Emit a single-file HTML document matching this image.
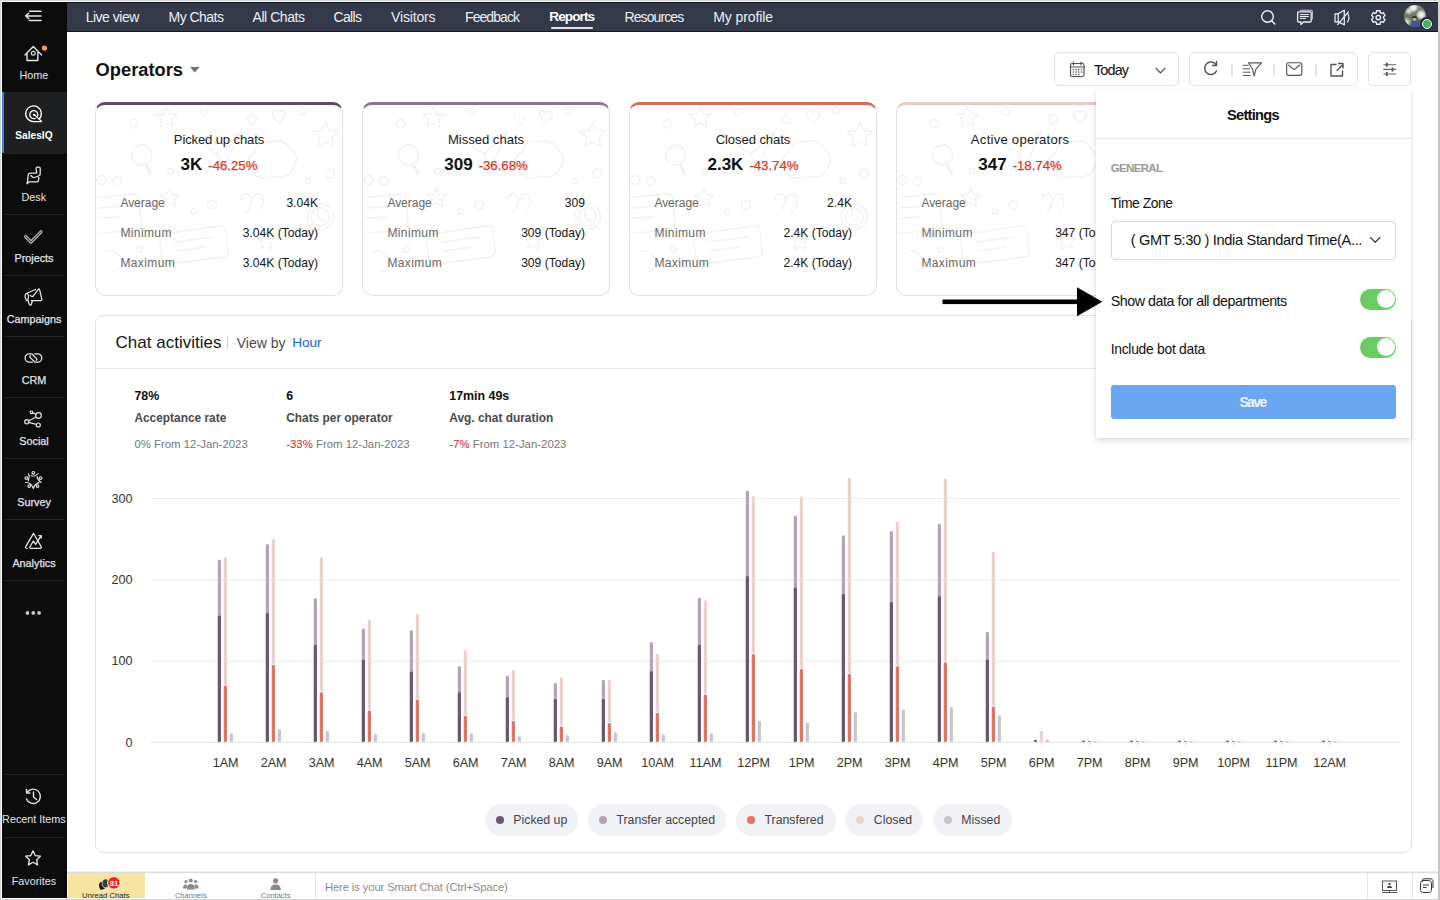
<!DOCTYPE html><html><head><meta charset="utf-8"><style>
*{box-sizing:border-box;margin:0;padding:0}
html,body{width:1440px;height:900px;overflow:hidden;background:#d4d4d4;font-family:"Liberation Sans",sans-serif;}
.abs{position:absolute}
.t{position:absolute;white-space:nowrap;line-height:1}
svg{position:absolute;left:0;top:0;overflow:visible}
</style></head><body>
<div class="abs" style="left:1px;top:1px;width:1437px;height:898px;background:#fff"></div>
<div class="abs" style="left:1438px;top:32px;width:2px;height:868px;background:#c6c6c6"></div>
<div class="abs" style="left:2px;top:2px;width:65px;height:896px;background:#0c0c0c"></div>
<div class="abs" style="left:2px;top:92px;width:65px;height:61px;background:#1e1f20"></div>
<div class="abs" style="left:2px;top:92px;width:2px;height:61px;background:#3d86e0"></div>
<div class="abs" style="left:4px;top:153px;width:60px;height:1px;background:#232324"></div>
<div class="abs" style="left:4px;top:214px;width:60px;height:1px;background:#232324"></div>
<div class="abs" style="left:4px;top:275px;width:60px;height:1px;background:#232324"></div>
<div class="abs" style="left:4px;top:336px;width:60px;height:1px;background:#232324"></div>
<div class="abs" style="left:4px;top:397px;width:60px;height:1px;background:#232324"></div>
<div class="abs" style="left:4px;top:458px;width:60px;height:1px;background:#232324"></div>
<div class="abs" style="left:4px;top:519px;width:60px;height:1px;background:#232324"></div>
<div class="abs" style="left:4px;top:580px;width:60px;height:1px;background:#232324"></div>
<div class="abs" style="left:4px;top:774px;width:60px;height:1px;background:#232324"></div>
<div class="abs" style="left:4px;top:837px;width:60px;height:1px;background:#232324"></div>
<div class="t" style="left:-366.23px;width:800px;text-align:center;top:69.86px;font-size:10.8px;font-weight:normal;color:#e2e2e8;-webkit-text-stroke:0.25px #e2e2e8letter-spacing:-0.469px;">Home</div>
<div class="t" style="left:-366.14px;width:800px;text-align:center;top:131.37px;font-size:10.2px;font-weight:bold;color:#ffffff;-webkit-text-stroke:0.25px #ffffffletter-spacing:-0.270px;">SalesIQ</div>
<div class="t" style="left:-366.22px;width:800px;text-align:center;top:191.86px;font-size:10.8px;font-weight:normal;color:#e2e2e8;-webkit-text-stroke:0.25px #e2e2e8letter-spacing:-0.435px;">Desk</div>
<div class="t" style="left:-366.00px;width:800px;text-align:center;top:252.86px;font-size:10.8px;font-weight:normal;color:#e2e2e8;-webkit-text-stroke:0.25px #e2e2e8">Projects</div>
<div class="t" style="left:-366.00px;width:800px;text-align:center;top:313.86px;font-size:10.8px;font-weight:normal;color:#e2e2e8;-webkit-text-stroke:0.25px #e2e2e8">Campaigns</div>
<div class="t" style="left:-366.00px;width:800px;text-align:center;top:374.86px;font-size:10.8px;font-weight:normal;color:#e2e2e8;-webkit-text-stroke:0.25px #e2e2e8">CRM</div>
<div class="t" style="left:-366.00px;width:800px;text-align:center;top:435.86px;font-size:10.8px;font-weight:normal;color:#e2e2e8;-webkit-text-stroke:0.25px #e2e2e8">Social</div>
<div class="t" style="left:-366.00px;width:800px;text-align:center;top:496.86px;font-size:10.8px;font-weight:normal;color:#e2e2e8;-webkit-text-stroke:0.25px #e2e2e8">Survey</div>
<div class="t" style="left:-366.00px;width:800px;text-align:center;top:557.86px;font-size:10.8px;font-weight:normal;color:#e2e2e8;-webkit-text-stroke:0.25px #e2e2e8">Analytics</div>
<div class="t" style="left:-366.12px;width:800px;text-align:center;top:813.86px;font-size:10.8px;font-weight:normal;color:#e2e2e8;-webkit-text-stroke:0.25px #e2e2e8letter-spacing:-0.238px;">Recent Items</div>
<div class="t" style="left:-366.06px;width:800px;text-align:center;top:875.86px;font-size:10.8px;font-weight:normal;color:#e2e2e8;-webkit-text-stroke:0.25px #e2e2e8letter-spacing:-0.114px;">Favorites</div>
<svg width="1440" height="900" fill="none" stroke="#e4e4ea" stroke-width="1.4" stroke-linecap="round" stroke-linejoin="round">
  <path d="M29.5 11.2H41M29.5 20.6H41M26.5 15.9H41" stroke-width="1.5"/>
  <path d="M28.7 13.2L25.8 15.9L28.7 18.6" stroke-width="1.5"/>
  <path d="M25 55L33.3 46.5L41.6 55M27 53V60.5H37.8V53"/>
  <circle cx="33.3" cy="53.2" r="1.9" stroke-width="1.2"/>
  <circle cx="44.5" cy="48.1" r="2.6" fill="#f2a23a" stroke="none"/>
  <g stroke="#fff" stroke-width="1.3"><path d="M39.0 119.3A7.8 7.8 0 1 0 33.4 121.55H41.6L34.6 114.9"/><path d="M35.17 118.36A4 4 0 1 1 37.56 115.97"/></g><circle cx="34.1" cy="114.9" r="1.1" fill="#fff" stroke="none"/>
  <path d="M27.2 183.6L28.3 174.8Q28.6 173.2 30.2 173.2H35.6Q37 173.2 36.6 171.6L36.1 169.3Q35.8 167.1 37.6 167.1H39Q40.2 167.1 40.2 168.6V173.5Q40.2 175.3 38.4 176L34.3 177.5Q33.5 177.8 32.8 177.3L30.9 175.6" stroke-width="1.3"/><path d="M27.2 183.6L29.2 181.8H37Q38.3 181.8 38.5 180.3L38.9 177.3" stroke-width="1.3"/>
  <path d="M25.5 236.5L31 242L41 231.8" stroke="#a8a8b0" stroke-width="3.3" stroke-linecap="round"/><path d="M25.5 236.5L31 242L41 231.8" stroke="#0c0c0c" stroke-width="0.9" stroke-dasharray="0.9 0.9"/>
  <path d="M25.8 293.8L35.5 289.5M30.2 295.3Q31.5 296.8 33 296.3L38.4 289.2Q39 288.5 39.5 289.3L41.8 299Q42 300.5 40.5 300.5H31.3M25.8 293.8Q24.8 295 25.2 297.5L26.3 300Q27.3 301.3 28 300.2L28.5 296Q28.2 294 27.2 293.6M28 300.5L29.5 304.8Q30.5 305.5 31.3 304.5L32.3 300.8" stroke-width="1.25"/>
  <path d="M32.3 362.2H29.3A4.2 4.2 0 0 1 29.3 353.8H31.8L36.6 358.6Q37.3 359.6 36.2 360.2M34.8 353.8H37.6A4.2 4.2 0 0 1 37.6 362.2H34.9L30.1 357.4Q29.4 356.4 30.5 355.8" stroke-width="1.3"/>
  <g stroke-width="1.2"><circle cx="31.5" cy="412.3" r="1.3"/><circle cx="38.5" cy="415.5" r="2.8"/><circle cx="26.8" cy="421.7" r="2.1"/><circle cx="38.3" cy="425" r="2"/><path d="M32.8 412.9L35.7 414.2M36 417.3L28.7 420.7M28.8 422.4L36.3 424.4"/></g>
  <g stroke-width="1.15"><circle cx="33.3" cy="472.8" r="1.3"/><circle cx="26.3" cy="478" r="1.3"/><circle cx="40.5" cy="478" r="1.3"/><circle cx="29.2" cy="486" r="1.3"/><circle cx="37.5" cy="486" r="1.3"/><path d="M28.6 473.8Q30 477 28.2 480.7M31 475.6Q33.3 477.6 38.2 473.6M37.3 476.5Q36.8 479 41 482.5M25.5 482.5Q31 482 33.3 488.5Q35 483.5 39 482.6"/></g>
  <path d="M27 548.3Q25 548.3 25.6 546.8L33.5 533.3L41.2 546.8Q41.6 548.3 40 548.3H30.3" stroke-width="1.3"/><path d="M29.6 547.5L33.3 541L35.6 544.3L41 535.8M38.8 535.6H41.2V538" stroke-width="1.3"/>
  <circle cx="27.45" cy="612.9" r="1.85" fill="#c6c6d2" stroke="none"/><circle cx="33.3" cy="612.9" r="1.85" fill="#c6c6d2" stroke="none"/><circle cx="39.1" cy="612.9" r="1.85" fill="#c6c6d2" stroke="none"/>
  <path d="M26.5 799A7.2 7.2 0 1 0 27.6 791.8"/>
  <path d="M26.5 789.5V793H30"/>
  <path d="M33.5 792V797L36.5 799.5"/>
  <path d="M33 850.8L35.2 855.6L40.4 856.2L36.6 859.7L37.6 864.9L33 862.3L28.4 864.9L29.4 859.7L25.6 856.2L30.8 855.6Z" stroke-width="1.3"/>
</svg>

<div class="abs" style="left:67px;top:2px;width:1371px;height:30px;background:#353a4b;border-top:1px solid #0d1120;border-bottom:1px solid #12172a"></div>
<div class="t" style="left:85.70px;top:9.75px;font-size:14px;font-weight:normal;color:#eceef3;letter-spacing:-0.497px;">Live view</div>
<div class="t" style="left:168.50px;top:9.75px;font-size:14px;font-weight:normal;color:#eceef3;letter-spacing:-0.532px;">My Chats</div>
<div class="t" style="left:252.50px;top:9.75px;font-size:14px;font-weight:normal;color:#eceef3;letter-spacing:-0.440px;">All Chats</div>
<div class="t" style="left:333.60px;top:9.75px;font-size:14px;font-weight:normal;color:#eceef3;letter-spacing:-0.704px;">Calls</div>
<div class="t" style="left:391.00px;top:9.75px;font-size:14px;font-weight:normal;color:#eceef3;letter-spacing:-0.149px;">Visitors</div>
<div class="t" style="left:465.00px;top:9.75px;font-size:14px;font-weight:normal;color:#eceef3;letter-spacing:-0.925px;">Feedback</div>
<div class="t" style="left:624.50px;top:9.75px;font-size:14px;font-weight:normal;color:#eceef3;letter-spacing:-0.895px;">Resources</div>
<div class="t" style="left:713.30px;top:9.75px;font-size:14px;font-weight:normal;color:#eceef3;letter-spacing:-0.103px;">My profile</div>
<div class="t" style="left:549.30px;top:10.09px;font-size:13.6px;font-weight:bold;color:#ffffff;letter-spacing:-0.939px;">Reports</div>
<div class="abs" style="left:551px;top:26.5px;width:42px;height:2px;background:#e6e6ea;border-radius:1px"></div>
<svg width="1440" height="900" fill="none" stroke="#f0f0f4" stroke-width="1.4" stroke-linecap="round" stroke-linejoin="round">
  <circle cx="1267.5" cy="16.5" r="5.8"/><path d="M1271.7 20.7L1274.8 24"/>
  <path d="M1298.8 11.8H1310Q1311.2 11.8 1311.2 13V20.8Q1311.2 22 1310 22H1303.5L1301 24.6V22H1298.8Q1297.6 22 1297.6 20.8V13Q1297.6 11.8 1298.8 11.8Z" stroke-width="1.3"/>
  <path d="M1300.5 10.3H1311Q1312.3 10.3 1312.3 11.6V19" stroke-width="1.1" stroke="#c9cad2"/>
  <path d="M1300.2 14.6H1308.4M1300.2 16.5H1308.4M1300.2 18.4H1305.6" stroke-width="1"/>
  <path d="M1335 13.8H1338.2V21.9H1335Z" stroke-width="1.25"/>
  <path d="M1338.2 13.8L1344.3 10.2V24.8L1338.2 21.9" stroke-width="1.25"/>
  <path d="M1347.6 13.2Q1350.2 17.5 1347.6 22" stroke-width="1.2"/>
  <path d="M1337.6 24.6L1348.4 11.8" stroke-width="1.2"/>
  <path d="M1376.61 10.71 L1379.99 10.71 L1380.29 12.59 L1381.56 13.32 L1383.34 12.64 L1385.03 15.57 L1383.55 16.76 L1383.55 18.24 L1385.03 19.43 L1383.34 22.36 L1381.56 21.68 L1380.29 22.41 L1379.99 24.29 L1376.61 24.29 L1376.31 22.41 L1375.04 21.68 L1373.26 22.36 L1371.57 19.43 L1373.05 18.24 L1373.05 16.76 L1371.57 15.57 L1373.26 12.64 L1375.04 13.32 L1376.31 12.59Z" stroke-width="1.35"/>
  <circle cx="1378.3" cy="17.5" r="2.2" stroke-width="1.35"/>
</svg>
<div class="abs" style="left:1404px;top:5px;width:22px;height:22px;border-radius:50%;overflow:hidden;background:radial-gradient(circle at 42% 12%,#f4f4f2 0,#e6e8e2 10%,rgba(200,205,195,0) 22%),radial-gradient(circle at 22% 28%,#eef0ea 0,rgba(220,225,215,0) 18%),radial-gradient(circle at 78% 45%,#f6f6f4 0,#e3e6df 12%,rgba(200,205,195,0) 26%),radial-gradient(circle at 12% 78%,#f2f2ee 0,rgba(230,230,225,0) 22%),linear-gradient(180deg,#8a9482 0%,#6e7b62 45%,#4f5a48 100%)"><div class="abs" style="left:6.5px;top:15.5px;width:8px;height:8px;border-radius:3px 3px 0 0;background:#3a55ad"></div><div class="abs" style="left:8.6px;top:12px;width:3.8px;height:4.2px;border-radius:50%;background:#c9a893"></div><div class="abs" style="left:8.4px;top:11.2px;width:4.2px;height:2px;border-radius:2px 2px 0 0;background:#2d2f45"></div></div>
<div class="abs" style="left:1420.3px;top:17.3px;width:13px;height:13px;border-radius:50%;background:#262b3b"></div>
<div class="abs" style="left:1421.5px;top:18.5px;width:10.5px;height:10.5px;border-radius:50%;background:#3fb466;border:1.6px solid #fff"></div>
<div class="t" style="left:95.60px;top:61.21px;font-size:18.3px;font-weight:bold;color:#111;">Operators</div>
<svg width="1440" height="900"><path d="M190 67H199.5L194.75 72.5Z" fill="#707070"/></svg>
<div class="abs" style="left:95px;top:102px;width:248px;height:194px;border:1px solid #e2e2e4;border-top:3.7px solid #5f4b60;border-radius:10px;background:#fff"></div>
<svg width="1440" height="900"><defs><clipPath id="cc95"><rect x="96" y="105.7" width="246" height="189" rx="9"/></clipPath></defs><g clip-path="url(#cc95)"><g transform="translate(95 102)"><g fill="none" stroke="#f1f1f1" stroke-width="1.3" stroke-linecap="round" stroke-linejoin="round">
<circle cx="38.6" cy="21.7" r="4.3"/><circle cx="109.4" cy="9.7" r="3.5"/><circle cx="157" cy="17.3" r="4.5"/><circle cx="207" cy="8.7" r="3.5"/>
<path d="M71.5 5L74.5 12L82 12.5L76.5 17.5L78 25L71.5 21L65 25L66.5 17.5L61 12.5L68.5 12Z"/>
<path d="M184 21Q176 15 178 10.5Q181 7 184 10.5Q187 7 190 10.5Q192 15 184 21Z"/>
<path d="M230.7 20L234.5 28.5L243.5 29.5L236.8 35.5L238.7 44.5L230.7 40L222.7 44.5L224.6 35.5L217.9 29.5L226.9 28.5Z"/>
<circle cx="46.6" cy="53" r="10"/><path d="M51 62L55.5 72" stroke-width="3"/>
<path d="M110 44L146 30L128 66L122 52Z M122 52L146 30"/>
<path d="M160 50Q162 38 176 40Q190 36 196 48Q206 54 198 66Q194 78 178 74Q162 80 156 68Q148 58 160 50Z"/>
<circle cx="6.5" cy="78" r="4.5"/><circle cx="21.7" cy="79" r="4.5"/><circle cx="75.8" cy="69.3" r="3"/>
<circle cx="235" cy="71.5" r="4.5"/><circle cx="213.4" cy="79" r="2.5"/>
<path d="M74.7 86L77.5 92.5L84.5 93L79.3 97.5L80.8 104.5L74.7 101L68.6 104.5L70.1 97.5L64.9 93L71.9 92.5Z"/>
<circle cx="117" cy="103" r="4.5"/><circle cx="98.6" cy="109.4" r="2.5"/>
<path d="M146 98Q146 92 151 92Q156 92 156 98Q156 106 150 112M158 98Q158 92 163 92Q168 92 168 98Q168 106 162 112"/>
<path d="M-2 96L38 92Q44 92 44 98L46 122Q46 128 40 128L-2 132"/><path d="M4 106L30 104M4 116L24 115"/>
<circle cx="225.3" cy="114.8" r="13"/><circle cx="225.3" cy="114.8" r="9"/><path d="M223 108V116L229 119"/>
<path d="M70 132L124 124Q130 123 131 129L133 148Q134 154 128 155L74 162Q68 163 67 157L65 139Q64 133 70 132Z"/><path d="M80 140L118 135M82 149L110 145"/>
<path d="M171 130L173.5 136L180 136.5L175 140.5L176.5 147L171 143.8L165.5 147L167 140.5L162 136.5L168.5 136Z"/>
<circle cx="44.4" cy="147.3" r="3"/><circle cx="200" cy="165" r="3"/><path d="M10 150Q20 146 26 156Q30 166 18 170"/>
</g></g></g></svg>
<div class="t" style="left:-181.07px;width:800px;text-align:center;top:133.11px;font-size:13.1px;font-weight:normal;color:#1a1a1a;letter-spacing:-0.148px;">Picked up chats</div>
<div class="t" style="left:-181px;width:800px;text-align:center;top:155.71px;font-size:17px;font-weight:bold;color:#111">3K<span style="font-size:13.2px;font-weight:normal;color:#e2341b;margin-left:6px;-webkit-text-stroke:0.25px #e2341b">-46.25%</span></div>
<div class="t" style="left:120.40px;top:196.64px;font-size:12px;font-weight:normal;color:#676767;letter-spacing:-0.029px;">Average</div>
<div class="t" style="left:-482.00px;width:800px;text-align:right;top:196.56px;font-size:12.1px;font-weight:normal;color:#151515;">3.04K</div>
<div class="t" style="left:120.40px;top:226.64px;font-size:12px;font-weight:normal;color:#676767;letter-spacing:0.389px;">Minimum</div>
<div class="t" style="left:-482.00px;width:800px;text-align:right;top:226.56px;font-size:12.1px;font-weight:normal;color:#151515;">3.04K (Today)</div>
<div class="t" style="left:120.40px;top:256.64px;font-size:12px;font-weight:normal;color:#676767;letter-spacing:0.383px;">Maximum</div>
<div class="t" style="left:-482.00px;width:800px;text-align:right;top:256.56px;font-size:12.1px;font-weight:normal;color:#151515;">3.04K (Today)</div>
<div class="abs" style="left:362px;top:102px;width:248px;height:194px;border:1px solid #e2e2e4;border-top:3.7px solid #8c7290;border-radius:10px;background:#fff"></div>
<svg width="1440" height="900"><defs><clipPath id="cc362"><rect x="363" y="105.7" width="246" height="189" rx="9"/></clipPath></defs><g clip-path="url(#cc362)"><g transform="translate(362 102)"><g fill="none" stroke="#f1f1f1" stroke-width="1.3" stroke-linecap="round" stroke-linejoin="round">
<circle cx="38.6" cy="21.7" r="4.3"/><circle cx="109.4" cy="9.7" r="3.5"/><circle cx="157" cy="17.3" r="4.5"/><circle cx="207" cy="8.7" r="3.5"/>
<path d="M71.5 5L74.5 12L82 12.5L76.5 17.5L78 25L71.5 21L65 25L66.5 17.5L61 12.5L68.5 12Z"/>
<path d="M184 21Q176 15 178 10.5Q181 7 184 10.5Q187 7 190 10.5Q192 15 184 21Z"/>
<path d="M230.7 20L234.5 28.5L243.5 29.5L236.8 35.5L238.7 44.5L230.7 40L222.7 44.5L224.6 35.5L217.9 29.5L226.9 28.5Z"/>
<circle cx="46.6" cy="53" r="10"/><path d="M51 62L55.5 72" stroke-width="3"/>
<path d="M110 44L146 30L128 66L122 52Z M122 52L146 30"/>
<path d="M160 50Q162 38 176 40Q190 36 196 48Q206 54 198 66Q194 78 178 74Q162 80 156 68Q148 58 160 50Z"/>
<circle cx="6.5" cy="78" r="4.5"/><circle cx="21.7" cy="79" r="4.5"/><circle cx="75.8" cy="69.3" r="3"/>
<circle cx="235" cy="71.5" r="4.5"/><circle cx="213.4" cy="79" r="2.5"/>
<path d="M74.7 86L77.5 92.5L84.5 93L79.3 97.5L80.8 104.5L74.7 101L68.6 104.5L70.1 97.5L64.9 93L71.9 92.5Z"/>
<circle cx="117" cy="103" r="4.5"/><circle cx="98.6" cy="109.4" r="2.5"/>
<path d="M146 98Q146 92 151 92Q156 92 156 98Q156 106 150 112M158 98Q158 92 163 92Q168 92 168 98Q168 106 162 112"/>
<path d="M-2 96L38 92Q44 92 44 98L46 122Q46 128 40 128L-2 132"/><path d="M4 106L30 104M4 116L24 115"/>
<circle cx="225.3" cy="114.8" r="13"/><circle cx="225.3" cy="114.8" r="9"/><path d="M223 108V116L229 119"/>
<path d="M70 132L124 124Q130 123 131 129L133 148Q134 154 128 155L74 162Q68 163 67 157L65 139Q64 133 70 132Z"/><path d="M80 140L118 135M82 149L110 145"/>
<path d="M171 130L173.5 136L180 136.5L175 140.5L176.5 147L171 143.8L165.5 147L167 140.5L162 136.5L168.5 136Z"/>
<circle cx="44.4" cy="147.3" r="3"/><circle cx="200" cy="165" r="3"/><path d="M10 150Q20 146 26 156Q30 166 18 170"/>
</g></g></g></svg>
<div class="t" style="left:85.99px;width:800px;text-align:center;top:133.11px;font-size:13.1px;font-weight:normal;color:#1a1a1a;letter-spacing:-0.022px;">Missed chats</div>
<div class="t" style="left:86px;width:800px;text-align:center;top:155.71px;font-size:17px;font-weight:bold;color:#111">309<span style="font-size:13.2px;font-weight:normal;color:#e2341b;margin-left:6px;-webkit-text-stroke:0.25px #e2341b">-36.68%</span></div>
<div class="t" style="left:387.40px;top:196.64px;font-size:12px;font-weight:normal;color:#676767;letter-spacing:-0.029px;">Average</div>
<div class="t" style="left:-215.00px;width:800px;text-align:right;top:196.56px;font-size:12.1px;font-weight:normal;color:#151515;">309</div>
<div class="t" style="left:387.40px;top:226.64px;font-size:12px;font-weight:normal;color:#676767;letter-spacing:0.389px;">Minimum</div>
<div class="t" style="left:-215.00px;width:800px;text-align:right;top:226.56px;font-size:12.1px;font-weight:normal;color:#151515;">309 (Today)</div>
<div class="t" style="left:387.40px;top:256.64px;font-size:12px;font-weight:normal;color:#676767;letter-spacing:0.383px;">Maximum</div>
<div class="t" style="left:-215.00px;width:800px;text-align:right;top:256.56px;font-size:12.1px;font-weight:normal;color:#151515;">309 (Today)</div>
<div class="abs" style="left:629px;top:102px;width:248px;height:194px;border:1px solid #e2e2e4;border-top:3.7px solid #d9695b;border-radius:10px;background:#fff"></div>
<svg width="1440" height="900"><defs><clipPath id="cc629"><rect x="630" y="105.7" width="246" height="189" rx="9"/></clipPath></defs><g clip-path="url(#cc629)"><g transform="translate(629 102)"><g fill="none" stroke="#f1f1f1" stroke-width="1.3" stroke-linecap="round" stroke-linejoin="round">
<circle cx="38.6" cy="21.7" r="4.3"/><circle cx="109.4" cy="9.7" r="3.5"/><circle cx="157" cy="17.3" r="4.5"/><circle cx="207" cy="8.7" r="3.5"/>
<path d="M71.5 5L74.5 12L82 12.5L76.5 17.5L78 25L71.5 21L65 25L66.5 17.5L61 12.5L68.5 12Z"/>
<path d="M184 21Q176 15 178 10.5Q181 7 184 10.5Q187 7 190 10.5Q192 15 184 21Z"/>
<path d="M230.7 20L234.5 28.5L243.5 29.5L236.8 35.5L238.7 44.5L230.7 40L222.7 44.5L224.6 35.5L217.9 29.5L226.9 28.5Z"/>
<circle cx="46.6" cy="53" r="10"/><path d="M51 62L55.5 72" stroke-width="3"/>
<path d="M110 44L146 30L128 66L122 52Z M122 52L146 30"/>
<path d="M160 50Q162 38 176 40Q190 36 196 48Q206 54 198 66Q194 78 178 74Q162 80 156 68Q148 58 160 50Z"/>
<circle cx="6.5" cy="78" r="4.5"/><circle cx="21.7" cy="79" r="4.5"/><circle cx="75.8" cy="69.3" r="3"/>
<circle cx="235" cy="71.5" r="4.5"/><circle cx="213.4" cy="79" r="2.5"/>
<path d="M74.7 86L77.5 92.5L84.5 93L79.3 97.5L80.8 104.5L74.7 101L68.6 104.5L70.1 97.5L64.9 93L71.9 92.5Z"/>
<circle cx="117" cy="103" r="4.5"/><circle cx="98.6" cy="109.4" r="2.5"/>
<path d="M146 98Q146 92 151 92Q156 92 156 98Q156 106 150 112M158 98Q158 92 163 92Q168 92 168 98Q168 106 162 112"/>
<path d="M-2 96L38 92Q44 92 44 98L46 122Q46 128 40 128L-2 132"/><path d="M4 106L30 104M4 116L24 115"/>
<circle cx="225.3" cy="114.8" r="13"/><circle cx="225.3" cy="114.8" r="9"/><path d="M223 108V116L229 119"/>
<path d="M70 132L124 124Q130 123 131 129L133 148Q134 154 128 155L74 162Q68 163 67 157L65 139Q64 133 70 132Z"/><path d="M80 140L118 135M82 149L110 145"/>
<path d="M171 130L173.5 136L180 136.5L175 140.5L176.5 147L171 143.8L165.5 147L167 140.5L162 136.5L168.5 136Z"/>
<circle cx="44.4" cy="147.3" r="3"/><circle cx="200" cy="165" r="3"/><path d="M10 150Q20 146 26 156Q30 166 18 170"/>
</g></g></g></svg>
<div class="t" style="left:352.95px;width:800px;text-align:center;top:133.11px;font-size:13.1px;font-weight:normal;color:#1a1a1a;letter-spacing:-0.093px;">Closed chats</div>
<div class="t" style="left:353px;width:800px;text-align:center;top:155.71px;font-size:17px;font-weight:bold;color:#111">2.3K<span style="font-size:13.2px;font-weight:normal;color:#e2341b;margin-left:6px;-webkit-text-stroke:0.25px #e2341b">-43.74%</span></div>
<div class="t" style="left:654.40px;top:196.64px;font-size:12px;font-weight:normal;color:#676767;letter-spacing:-0.029px;">Average</div>
<div class="t" style="left:52.00px;width:800px;text-align:right;top:196.56px;font-size:12.1px;font-weight:normal;color:#151515;">2.4K</div>
<div class="t" style="left:654.40px;top:226.64px;font-size:12px;font-weight:normal;color:#676767;letter-spacing:0.389px;">Minimum</div>
<div class="t" style="left:52.00px;width:800px;text-align:right;top:226.56px;font-size:12.1px;font-weight:normal;color:#151515;">2.4K (Today)</div>
<div class="t" style="left:654.40px;top:256.64px;font-size:12px;font-weight:normal;color:#676767;letter-spacing:0.383px;">Maximum</div>
<div class="t" style="left:52.00px;width:800px;text-align:right;top:256.56px;font-size:12.1px;font-weight:normal;color:#151515;">2.4K (Today)</div>
<div class="abs" style="left:896px;top:102px;width:248px;height:194px;border:1px solid #e2e2e4;border-top:3.7px solid #e6cbc5;border-radius:10px;background:#fff"></div>
<svg width="1440" height="900"><defs><clipPath id="cc896"><rect x="897" y="105.7" width="246" height="189" rx="9"/></clipPath></defs><g clip-path="url(#cc896)"><g transform="translate(896 102)"><g fill="none" stroke="#f1f1f1" stroke-width="1.3" stroke-linecap="round" stroke-linejoin="round">
<circle cx="38.6" cy="21.7" r="4.3"/><circle cx="109.4" cy="9.7" r="3.5"/><circle cx="157" cy="17.3" r="4.5"/><circle cx="207" cy="8.7" r="3.5"/>
<path d="M71.5 5L74.5 12L82 12.5L76.5 17.5L78 25L71.5 21L65 25L66.5 17.5L61 12.5L68.5 12Z"/>
<path d="M184 21Q176 15 178 10.5Q181 7 184 10.5Q187 7 190 10.5Q192 15 184 21Z"/>
<path d="M230.7 20L234.5 28.5L243.5 29.5L236.8 35.5L238.7 44.5L230.7 40L222.7 44.5L224.6 35.5L217.9 29.5L226.9 28.5Z"/>
<circle cx="46.6" cy="53" r="10"/><path d="M51 62L55.5 72" stroke-width="3"/>
<path d="M110 44L146 30L128 66L122 52Z M122 52L146 30"/>
<path d="M160 50Q162 38 176 40Q190 36 196 48Q206 54 198 66Q194 78 178 74Q162 80 156 68Q148 58 160 50Z"/>
<circle cx="6.5" cy="78" r="4.5"/><circle cx="21.7" cy="79" r="4.5"/><circle cx="75.8" cy="69.3" r="3"/>
<circle cx="235" cy="71.5" r="4.5"/><circle cx="213.4" cy="79" r="2.5"/>
<path d="M74.7 86L77.5 92.5L84.5 93L79.3 97.5L80.8 104.5L74.7 101L68.6 104.5L70.1 97.5L64.9 93L71.9 92.5Z"/>
<circle cx="117" cy="103" r="4.5"/><circle cx="98.6" cy="109.4" r="2.5"/>
<path d="M146 98Q146 92 151 92Q156 92 156 98Q156 106 150 112M158 98Q158 92 163 92Q168 92 168 98Q168 106 162 112"/>
<path d="M-2 96L38 92Q44 92 44 98L46 122Q46 128 40 128L-2 132"/><path d="M4 106L30 104M4 116L24 115"/>
<circle cx="225.3" cy="114.8" r="13"/><circle cx="225.3" cy="114.8" r="9"/><path d="M223 108V116L229 119"/>
<path d="M70 132L124 124Q130 123 131 129L133 148Q134 154 128 155L74 162Q68 163 67 157L65 139Q64 133 70 132Z"/><path d="M80 140L118 135M82 149L110 145"/>
<path d="M171 130L173.5 136L180 136.5L175 140.5L176.5 147L171 143.8L165.5 147L167 140.5L162 136.5L168.5 136Z"/>
<circle cx="44.4" cy="147.3" r="3"/><circle cx="200" cy="165" r="3"/><path d="M10 150Q20 146 26 156Q30 166 18 170"/>
</g></g></g></svg>
<div class="t" style="left:620.12px;width:800px;text-align:center;top:133.11px;font-size:13.1px;font-weight:normal;color:#1a1a1a;letter-spacing:0.243px;">Active operators</div>
<div class="t" style="left:620px;width:800px;text-align:center;top:155.71px;font-size:17px;font-weight:bold;color:#111">347<span style="font-size:13.2px;font-weight:normal;color:#e2341b;margin-left:6px;-webkit-text-stroke:0.25px #e2341b">-18.74%</span></div>
<div class="t" style="left:921.40px;top:196.64px;font-size:12px;font-weight:normal;color:#676767;letter-spacing:-0.029px;">Average</div>
<div class="t" style="left:319.00px;width:800px;text-align:right;top:196.56px;font-size:12.1px;font-weight:normal;color:#151515;">347</div>
<div class="t" style="left:921.40px;top:226.64px;font-size:12px;font-weight:normal;color:#676767;letter-spacing:0.389px;">Minimum</div>
<div class="t" style="left:319.00px;width:800px;text-align:right;top:226.56px;font-size:12.1px;font-weight:normal;color:#151515;">347 (Today)</div>
<div class="t" style="left:921.40px;top:256.64px;font-size:12px;font-weight:normal;color:#676767;letter-spacing:0.383px;">Maximum</div>
<div class="t" style="left:319.00px;width:800px;text-align:right;top:256.56px;font-size:12.1px;font-weight:normal;color:#151515;">347 (Today)</div>
<div class="abs" style="left:95px;top:315px;width:1317px;height:538px;border:1px solid #e4e4e6;border-radius:8px;background:#fff"></div>
<div class="abs" style="left:96px;top:368px;width:1315px;height:1px;background:#ebebed"></div>
<div class="t" style="left:115.60px;top:333.71px;font-size:17px;font-weight:normal;color:#161616;-webkit-text-stroke:0.2px #161616letter-spacing:-0.322px;">Chat activities</div>
<div class="abs" style="left:226.5px;top:336px;width:1px;height:13px;background:#cfcfd3"></div>
<div class="t" style="left:236.70px;top:336.15px;font-size:14px;font-weight:normal;color:#4a4a4a;">View by</div>
<div class="t" style="left:292.20px;top:336.49px;font-size:13.6px;font-weight:normal;color:#1565dc;">Hour</div>
<div class="t" style="left:134.40px;top:389.60px;font-size:12.4px;font-weight:bold;color:#111;">78%</div>
<div class="t" style="left:134.40px;top:412.93px;font-size:11.9px;font-weight:bold;color:#4a4a4a;">Acceptance rate</div>
<div class="t" style="left:134.40px;top:439.25px;font-size:11.4px;font-weight:normal;color:#777;">0% From 12-Jan-2023</div>
<div class="t" style="left:286.20px;top:389.60px;font-size:12.4px;font-weight:bold;color:#111;">6</div>
<div class="t" style="left:286.20px;top:412.93px;font-size:11.9px;font-weight:bold;color:#4a4a4a;">Chats per operator</div>
<div class="t" style="left:286.20px;top:439.25px;font-size:11.4px;font-weight:normal;color:#777;"><span style="color:#d8261c">-33%</span> From 12-Jan-2023</div>
<div class="t" style="left:449.30px;top:389.60px;font-size:12.4px;font-weight:bold;color:#111;">17min 49s</div>
<div class="t" style="left:449.30px;top:412.93px;font-size:11.9px;font-weight:bold;color:#4a4a4a;">Avg. chat duration</div>
<div class="t" style="left:449.30px;top:439.25px;font-size:11.4px;font-weight:normal;color:#777;"><span style="color:#d8261c">-7%</span> From 12-Jan-2023</div>
<svg width="1440" height="900"><rect x="151" y="498.0" width="1249" height="1" fill="#ececee"/><rect x="151" y="579.3" width="1249" height="1" fill="#ececee"/><rect x="151" y="660.7" width="1249" height="1" fill="#ececee"/><rect x="151" y="741.8" width="1249" height="1" fill="#e2e2e4"/><rect x="225.1" y="742.5" width="1" height="3" fill="#e6e6e8"/><rect x="273.1" y="742.5" width="1" height="3" fill="#e6e6e8"/><rect x="321.1" y="742.5" width="1" height="3" fill="#e6e6e8"/><rect x="369.1" y="742.5" width="1" height="3" fill="#e6e6e8"/><rect x="417.1" y="742.5" width="1" height="3" fill="#e6e6e8"/><rect x="465.1" y="742.5" width="1" height="3" fill="#e6e6e8"/><rect x="513.1" y="742.5" width="1" height="3" fill="#e6e6e8"/><rect x="561.1" y="742.5" width="1" height="3" fill="#e6e6e8"/><rect x="609.1" y="742.5" width="1" height="3" fill="#e6e6e8"/><rect x="657.1" y="742.5" width="1" height="3" fill="#e6e6e8"/><rect x="705.1" y="742.5" width="1" height="3" fill="#e6e6e8"/><rect x="753.1" y="742.5" width="1" height="3" fill="#e6e6e8"/><rect x="801.1" y="742.5" width="1" height="3" fill="#e6e6e8"/><rect x="849.1" y="742.5" width="1" height="3" fill="#e6e6e8"/><rect x="897.1" y="742.5" width="1" height="3" fill="#e6e6e8"/><rect x="945.1" y="742.5" width="1" height="3" fill="#e6e6e8"/><rect x="993.1" y="742.5" width="1" height="3" fill="#e6e6e8"/><rect x="1041.1" y="742.5" width="1" height="3" fill="#e6e6e8"/><rect x="1089.1" y="742.5" width="1" height="3" fill="#e6e6e8"/><rect x="1137.1" y="742.5" width="1" height="3" fill="#e6e6e8"/><rect x="1185.1" y="742.5" width="1" height="3" fill="#e6e6e8"/><rect x="1233.1" y="742.5" width="1" height="3" fill="#e6e6e8"/><rect x="1281.1" y="742.5" width="1" height="3" fill="#e6e6e8"/><rect x="1329.1" y="742.5" width="1" height="3" fill="#e6e6e8"/></svg>
<div class="t" style="left:-667.50px;width:800px;text-align:right;top:492.73px;font-size:12.6px;font-weight:normal;color:#333;">300</div>
<div class="t" style="left:-667.50px;width:800px;text-align:right;top:574.03px;font-size:12.6px;font-weight:normal;color:#333;">200</div>
<div class="t" style="left:-667.50px;width:800px;text-align:right;top:655.33px;font-size:12.6px;font-weight:normal;color:#333;">100</div>
<div class="t" style="left:-667.50px;width:800px;text-align:right;top:736.63px;font-size:12.6px;font-weight:normal;color:#333;">0</div>
<div class="t" style="left:-174.40px;width:800px;text-align:center;top:756.53px;font-size:12.6px;font-weight:normal;color:#333;">1AM</div>
<div class="t" style="left:-126.40px;width:800px;text-align:center;top:756.53px;font-size:12.6px;font-weight:normal;color:#333;">2AM</div>
<div class="t" style="left:-78.40px;width:800px;text-align:center;top:756.53px;font-size:12.6px;font-weight:normal;color:#333;">3AM</div>
<div class="t" style="left:-30.40px;width:800px;text-align:center;top:756.53px;font-size:12.6px;font-weight:normal;color:#333;">4AM</div>
<div class="t" style="left:17.60px;width:800px;text-align:center;top:756.53px;font-size:12.6px;font-weight:normal;color:#333;">5AM</div>
<div class="t" style="left:65.60px;width:800px;text-align:center;top:756.53px;font-size:12.6px;font-weight:normal;color:#333;">6AM</div>
<div class="t" style="left:113.60px;width:800px;text-align:center;top:756.53px;font-size:12.6px;font-weight:normal;color:#333;">7AM</div>
<div class="t" style="left:161.60px;width:800px;text-align:center;top:756.53px;font-size:12.6px;font-weight:normal;color:#333;">8AM</div>
<div class="t" style="left:209.60px;width:800px;text-align:center;top:756.53px;font-size:12.6px;font-weight:normal;color:#333;">9AM</div>
<div class="t" style="left:257.60px;width:800px;text-align:center;top:756.53px;font-size:12.6px;font-weight:normal;color:#333;">10AM</div>
<div class="t" style="left:305.60px;width:800px;text-align:center;top:756.53px;font-size:12.6px;font-weight:normal;color:#333;">11AM</div>
<div class="t" style="left:353.60px;width:800px;text-align:center;top:756.53px;font-size:12.6px;font-weight:normal;color:#333;">12PM</div>
<div class="t" style="left:401.60px;width:800px;text-align:center;top:756.53px;font-size:12.6px;font-weight:normal;color:#333;">1PM</div>
<div class="t" style="left:449.60px;width:800px;text-align:center;top:756.53px;font-size:12.6px;font-weight:normal;color:#333;">2PM</div>
<div class="t" style="left:497.60px;width:800px;text-align:center;top:756.53px;font-size:12.6px;font-weight:normal;color:#333;">3PM</div>
<div class="t" style="left:545.60px;width:800px;text-align:center;top:756.53px;font-size:12.6px;font-weight:normal;color:#333;">4PM</div>
<div class="t" style="left:593.60px;width:800px;text-align:center;top:756.53px;font-size:12.6px;font-weight:normal;color:#333;">5PM</div>
<div class="t" style="left:641.60px;width:800px;text-align:center;top:756.53px;font-size:12.6px;font-weight:normal;color:#333;">6PM</div>
<div class="t" style="left:689.60px;width:800px;text-align:center;top:756.53px;font-size:12.6px;font-weight:normal;color:#333;">7PM</div>
<div class="t" style="left:737.60px;width:800px;text-align:center;top:756.53px;font-size:12.6px;font-weight:normal;color:#333;">8PM</div>
<div class="t" style="left:785.60px;width:800px;text-align:center;top:756.53px;font-size:12.6px;font-weight:normal;color:#333;">9PM</div>
<div class="t" style="left:833.60px;width:800px;text-align:center;top:756.53px;font-size:12.6px;font-weight:normal;color:#333;">10PM</div>
<div class="t" style="left:881.60px;width:800px;text-align:center;top:756.53px;font-size:12.6px;font-weight:normal;color:#333;">11PM</div>
<div class="t" style="left:929.60px;width:800px;text-align:center;top:756.53px;font-size:12.6px;font-weight:normal;color:#333;">12AM</div>
<svg width="1440" height="900"><rect x="217.80" y="559.60" width="3.2" height="182.40" rx="1.6" fill="#b5a3b8"/><rect x="217.80" y="615.60" width="3.2" height="126.40" rx="1.6" fill="#6c5970"/><rect x="223.80" y="557.10" width="3.2" height="184.90" rx="1.6" fill="#e9d4cd"/><rect x="223.80" y="684.60" width="3.2" height="1" fill="#fff"/><rect x="223.80" y="685.60" width="3.2" height="56.40" rx="1.6" fill="#df7464"/><rect x="229.80" y="733.20" width="3.2" height="8.80" rx="1.6" fill="#c6c6c8"/><rect x="265.80" y="544.00" width="3.2" height="198.00" rx="1.6" fill="#b5a3b8"/><rect x="265.80" y="612.80" width="3.2" height="129.20" rx="1.6" fill="#6c5970"/><rect x="271.80" y="539.00" width="3.2" height="203.00" rx="1.6" fill="#e9d4cd"/><rect x="271.80" y="663.80" width="3.2" height="1" fill="#fff"/><rect x="271.80" y="664.80" width="3.2" height="77.20" rx="1.6" fill="#df7464"/><rect x="277.80" y="728.90" width="3.2" height="13.10" rx="1.6" fill="#c6c6c8"/><rect x="313.80" y="597.90" width="3.2" height="144.10" rx="1.6" fill="#b5a3b8"/><rect x="313.80" y="644.50" width="3.2" height="97.50" rx="1.6" fill="#6c5970"/><rect x="319.80" y="557.10" width="3.2" height="184.90" rx="1.6" fill="#e9d4cd"/><rect x="319.80" y="691.20" width="3.2" height="1" fill="#fff"/><rect x="319.80" y="692.20" width="3.2" height="49.80" rx="1.6" fill="#df7464"/><rect x="325.80" y="730.70" width="3.2" height="11.30" rx="1.6" fill="#c6c6c8"/><rect x="361.80" y="628.40" width="3.2" height="113.60" rx="1.6" fill="#b5a3b8"/><rect x="361.80" y="659.50" width="3.2" height="82.50" rx="1.6" fill="#6c5970"/><rect x="367.80" y="619.70" width="3.2" height="122.30" rx="1.6" fill="#e9d4cd"/><rect x="367.80" y="709.50" width="3.2" height="1" fill="#fff"/><rect x="367.80" y="710.50" width="3.2" height="31.50" rx="1.6" fill="#df7464"/><rect x="373.80" y="733.80" width="3.2" height="8.20" rx="1.6" fill="#c6c6c8"/><rect x="409.80" y="629.90" width="3.2" height="112.10" rx="1.6" fill="#b5a3b8"/><rect x="409.80" y="671.60" width="3.2" height="70.40" rx="1.6" fill="#6c5970"/><rect x="415.80" y="613.70" width="3.2" height="128.30" rx="1.6" fill="#e9d4cd"/><rect x="415.80" y="698.60" width="3.2" height="1" fill="#fff"/><rect x="415.80" y="699.60" width="3.2" height="42.40" rx="1.6" fill="#df7464"/><rect x="421.80" y="732.90" width="3.2" height="9.10" rx="1.6" fill="#c6c6c8"/><rect x="457.80" y="666.00" width="3.2" height="76.00" rx="1.6" fill="#b5a3b8"/><rect x="457.80" y="692.20" width="3.2" height="49.80" rx="1.6" fill="#6c5970"/><rect x="463.80" y="649.50" width="3.2" height="92.50" rx="1.6" fill="#e9d4cd"/><rect x="463.80" y="714.80" width="3.2" height="1" fill="#fff"/><rect x="463.80" y="715.80" width="3.2" height="26.20" rx="1.6" fill="#df7464"/><rect x="469.80" y="733.20" width="3.2" height="8.80" rx="1.6" fill="#c6c6c8"/><rect x="505.80" y="675.70" width="3.2" height="66.30" rx="1.6" fill="#b5a3b8"/><rect x="505.80" y="697.10" width="3.2" height="44.90" rx="1.6" fill="#6c5970"/><rect x="511.80" y="670.00" width="3.2" height="72.00" rx="1.6" fill="#e9d4cd"/><rect x="511.80" y="719.80" width="3.2" height="1" fill="#fff"/><rect x="511.80" y="720.80" width="3.2" height="21.20" rx="1.6" fill="#df7464"/><rect x="517.80" y="736.30" width="3.2" height="5.70" rx="1.6" fill="#c6c6c8"/><rect x="553.80" y="683.10" width="3.2" height="58.90" rx="1.6" fill="#b5a3b8"/><rect x="553.80" y="698.70" width="3.2" height="43.30" rx="1.6" fill="#6c5970"/><rect x="559.80" y="677.20" width="3.2" height="64.80" rx="1.6" fill="#e9d4cd"/><rect x="559.80" y="725.40" width="3.2" height="1" fill="#fff"/><rect x="559.80" y="726.40" width="3.2" height="15.60" rx="1.6" fill="#df7464"/><rect x="565.80" y="735.10" width="3.2" height="6.90" rx="1.6" fill="#c6c6c8"/><rect x="601.80" y="679.70" width="3.2" height="62.30" rx="1.6" fill="#b5a3b8"/><rect x="601.80" y="698.70" width="3.2" height="43.30" rx="1.6" fill="#6c5970"/><rect x="607.80" y="679.70" width="3.2" height="62.30" rx="1.6" fill="#e9d4cd"/><rect x="607.80" y="722.00" width="3.2" height="1" fill="#fff"/><rect x="607.80" y="723.00" width="3.2" height="19.00" rx="1.6" fill="#df7464"/><rect x="613.80" y="732.30" width="3.2" height="9.70" rx="1.6" fill="#c6c6c8"/><rect x="649.80" y="642.10" width="3.2" height="99.90" rx="1.6" fill="#b5a3b8"/><rect x="649.80" y="671.00" width="3.2" height="71.00" rx="1.6" fill="#6c5970"/><rect x="655.80" y="653.60" width="3.2" height="88.40" rx="1.6" fill="#e9d4cd"/><rect x="655.80" y="711.70" width="3.2" height="1" fill="#fff"/><rect x="655.80" y="712.70" width="3.2" height="29.30" rx="1.6" fill="#df7464"/><rect x="661.80" y="734.20" width="3.2" height="7.80" rx="1.6" fill="#c6c6c8"/><rect x="697.80" y="597.60" width="3.2" height="144.40" rx="1.6" fill="#b5a3b8"/><rect x="697.80" y="644.50" width="3.2" height="97.50" rx="1.6" fill="#6c5970"/><rect x="703.80" y="600.00" width="3.2" height="142.00" rx="1.6" fill="#e9d4cd"/><rect x="703.80" y="693.60" width="3.2" height="1" fill="#fff"/><rect x="703.80" y="694.60" width="3.2" height="47.40" rx="1.6" fill="#df7464"/><rect x="709.80" y="733.20" width="3.2" height="8.80" rx="1.6" fill="#c6c6c8"/><rect x="745.80" y="490.50" width="3.2" height="251.50" rx="1.6" fill="#b5a3b8"/><rect x="745.80" y="576.10" width="3.2" height="165.90" rx="1.6" fill="#6c5970"/><rect x="751.80" y="496.10" width="3.2" height="245.90" rx="1.6" fill="#e9d4cd"/><rect x="751.80" y="652.90" width="3.2" height="1" fill="#fff"/><rect x="751.80" y="653.90" width="3.2" height="88.10" rx="1.6" fill="#df7464"/><rect x="757.80" y="720.80" width="3.2" height="21.20" rx="1.6" fill="#c6c6c8"/><rect x="793.80" y="515.70" width="3.2" height="226.30" rx="1.6" fill="#b5a3b8"/><rect x="793.80" y="587.60" width="3.2" height="154.40" rx="1.6" fill="#6c5970"/><rect x="799.80" y="496.40" width="3.2" height="245.60" rx="1.6" fill="#e9d4cd"/><rect x="799.80" y="667.80" width="3.2" height="1" fill="#fff"/><rect x="799.80" y="668.80" width="3.2" height="73.20" rx="1.6" fill="#df7464"/><rect x="805.80" y="722.60" width="3.2" height="19.40" rx="1.6" fill="#c6c6c8"/><rect x="841.80" y="535.30" width="3.2" height="206.70" rx="1.6" fill="#b5a3b8"/><rect x="841.80" y="593.80" width="3.2" height="148.20" rx="1.6" fill="#6c5970"/><rect x="847.80" y="477.50" width="3.2" height="264.50" rx="1.6" fill="#e9d4cd"/><rect x="847.80" y="672.80" width="3.2" height="1" fill="#fff"/><rect x="847.80" y="673.80" width="3.2" height="68.20" rx="1.6" fill="#df7464"/><rect x="853.80" y="712.10" width="3.2" height="29.90" rx="1.6" fill="#c6c6c8"/><rect x="889.80" y="531.00" width="3.2" height="211.00" rx="1.6" fill="#b5a3b8"/><rect x="889.80" y="601.90" width="3.2" height="140.10" rx="1.6" fill="#6c5970"/><rect x="895.80" y="521.30" width="3.2" height="220.70" rx="1.6" fill="#e9d4cd"/><rect x="895.80" y="665.30" width="3.2" height="1" fill="#fff"/><rect x="895.80" y="666.30" width="3.2" height="75.70" rx="1.6" fill="#df7464"/><rect x="901.80" y="709.60" width="3.2" height="32.40" rx="1.6" fill="#c6c6c8"/><rect x="937.80" y="523.80" width="3.2" height="218.20" rx="1.6" fill="#b5a3b8"/><rect x="937.80" y="596.30" width="3.2" height="145.70" rx="1.6" fill="#6c5970"/><rect x="943.80" y="478.40" width="3.2" height="263.60" rx="1.6" fill="#e9d4cd"/><rect x="943.80" y="661.30" width="3.2" height="1" fill="#fff"/><rect x="943.80" y="662.30" width="3.2" height="79.70" rx="1.6" fill="#df7464"/><rect x="949.80" y="707.10" width="3.2" height="34.90" rx="1.6" fill="#c6c6c8"/><rect x="985.80" y="631.80" width="3.2" height="110.20" rx="1.6" fill="#b5a3b8"/><rect x="985.80" y="659.20" width="3.2" height="82.80" rx="1.6" fill="#6c5970"/><rect x="991.80" y="551.50" width="3.2" height="190.50" rx="1.6" fill="#e9d4cd"/><rect x="991.80" y="705.50" width="3.2" height="1" fill="#fff"/><rect x="991.80" y="706.50" width="3.2" height="35.50" rx="1.6" fill="#df7464"/><rect x="997.80" y="715.20" width="3.2" height="26.80" rx="1.6" fill="#c6c6c8"/><rect x="1033.80" y="739.60" width="3.2" height="2.40" rx="1.6" fill="#b5a3b8"/><rect x="1033.80" y="739.90" width="3.2" height="2.10" rx="1.6" fill="#6c5970"/><rect x="1039.80" y="730.70" width="3.2" height="11.30" rx="1.6" fill="#e9d4cd"/><rect x="1045.80" y="739.40" width="3.2" height="2.60" rx="1.6" fill="#c6c6c8"/><rect x="1081.80" y="740.60" width="3.2" height="1.40" rx="1.6" fill="#b5a3b8"/><rect x="1081.80" y="740.80" width="3.2" height="1.20" rx="1.6" fill="#6c5970"/><rect x="1087.80" y="740.60" width="3.2" height="1.40" rx="1.6" fill="#e9d4cd"/><rect x="1087.80" y="739.80" width="3.2" height="1" fill="#fff"/><rect x="1087.80" y="740.80" width="3.2" height="1.20" rx="1.6" fill="#df7464"/><rect x="1093.80" y="741.00" width="3.2" height="1.00" rx="1.6" fill="#c6c6c8"/><rect x="1129.80" y="740.60" width="3.2" height="1.40" rx="1.6" fill="#b5a3b8"/><rect x="1129.80" y="740.80" width="3.2" height="1.20" rx="1.6" fill="#6c5970"/><rect x="1135.80" y="740.60" width="3.2" height="1.40" rx="1.6" fill="#e9d4cd"/><rect x="1135.80" y="739.80" width="3.2" height="1" fill="#fff"/><rect x="1135.80" y="740.80" width="3.2" height="1.20" rx="1.6" fill="#df7464"/><rect x="1141.80" y="741.00" width="3.2" height="1.00" rx="1.6" fill="#c6c6c8"/><rect x="1177.80" y="740.60" width="3.2" height="1.40" rx="1.6" fill="#b5a3b8"/><rect x="1177.80" y="740.80" width="3.2" height="1.20" rx="1.6" fill="#6c5970"/><rect x="1183.80" y="740.60" width="3.2" height="1.40" rx="1.6" fill="#e9d4cd"/><rect x="1183.80" y="739.80" width="3.2" height="1" fill="#fff"/><rect x="1183.80" y="740.80" width="3.2" height="1.20" rx="1.6" fill="#df7464"/><rect x="1189.80" y="741.00" width="3.2" height="1.00" rx="1.6" fill="#c6c6c8"/><rect x="1225.80" y="740.60" width="3.2" height="1.40" rx="1.6" fill="#b5a3b8"/><rect x="1225.80" y="740.80" width="3.2" height="1.20" rx="1.6" fill="#6c5970"/><rect x="1231.80" y="740.60" width="3.2" height="1.40" rx="1.6" fill="#e9d4cd"/><rect x="1231.80" y="739.80" width="3.2" height="1" fill="#fff"/><rect x="1231.80" y="740.80" width="3.2" height="1.20" rx="1.6" fill="#df7464"/><rect x="1237.80" y="741.00" width="3.2" height="1.00" rx="1.6" fill="#c6c6c8"/><rect x="1273.80" y="740.60" width="3.2" height="1.40" rx="1.6" fill="#b5a3b8"/><rect x="1273.80" y="740.80" width="3.2" height="1.20" rx="1.6" fill="#6c5970"/><rect x="1279.80" y="740.60" width="3.2" height="1.40" rx="1.6" fill="#e9d4cd"/><rect x="1279.80" y="739.80" width="3.2" height="1" fill="#fff"/><rect x="1279.80" y="740.80" width="3.2" height="1.20" rx="1.6" fill="#df7464"/><rect x="1285.80" y="741.00" width="3.2" height="1.00" rx="1.6" fill="#c6c6c8"/><rect x="1321.80" y="740.60" width="3.2" height="1.40" rx="1.6" fill="#b5a3b8"/><rect x="1321.80" y="740.80" width="3.2" height="1.20" rx="1.6" fill="#6c5970"/><rect x="1327.80" y="740.60" width="3.2" height="1.40" rx="1.6" fill="#e9d4cd"/><rect x="1327.80" y="739.80" width="3.2" height="1" fill="#fff"/><rect x="1327.80" y="740.80" width="3.2" height="1.20" rx="1.6" fill="#df7464"/><rect x="1333.80" y="741.00" width="3.2" height="1.00" rx="1.6" fill="#c6c6c8"/></svg>
<div class="abs" style="left:484.8px;top:804px;width:92.9px;height:32px;border-radius:16px;background:#f1f2f6"></div>
<div class="abs" style="left:495.8px;top:815.5px;width:8px;height:8px;border-radius:50%;background:#6c5970"></div>
<div class="t" style="left:513.30px;top:813.79px;font-size:12.3px;font-weight:normal;color:#444;">Picked up</div>
<div class="abs" style="left:587.9px;top:804px;width:138.0px;height:32px;border-radius:16px;background:#f1f2f6"></div>
<div class="abs" style="left:598.9px;top:815.5px;width:8px;height:8px;border-radius:50%;background:#b5a3b8"></div>
<div class="t" style="left:616.40px;top:813.79px;font-size:12.3px;font-weight:normal;color:#444;">Transfer accepted</div>
<div class="abs" style="left:736.0px;top:804px;width:99.6px;height:32px;border-radius:16px;background:#f1f2f6"></div>
<div class="abs" style="left:747.0px;top:815.5px;width:8px;height:8px;border-radius:50%;background:#df7464"></div>
<div class="t" style="left:764.50px;top:813.79px;font-size:12.3px;font-weight:normal;color:#444;">Transfered</div>
<div class="abs" style="left:845.3px;top:804px;width:77.8px;height:32px;border-radius:16px;background:#f1f2f6"></div>
<div class="abs" style="left:856.3px;top:815.5px;width:8px;height:8px;border-radius:50%;background:#e9d4cd"></div>
<div class="t" style="left:873.80px;top:813.79px;font-size:12.3px;font-weight:normal;color:#444;">Closed</div>
<div class="abs" style="left:932.8px;top:804px;width:79.4px;height:32px;border-radius:16px;background:#f1f2f6"></div>
<div class="abs" style="left:943.8px;top:815.5px;width:8px;height:8px;border-radius:50%;background:#c6c6c8"></div>
<div class="t" style="left:961.30px;top:813.79px;font-size:12.3px;font-weight:normal;color:#444;">Missed</div>
<div class="abs" style="left:1054.4px;top:52.3px;width:124.2px;height:34.2px;border:1px solid #e2e2e4;border-radius:5px;background:#fff"></div>
<div class="abs" style="left:1189.4px;top:52.3px;width:168.4px;height:34.2px;border:1px solid #e2e2e4;border-radius:5px;background:#fff"></div>
<div class="abs" style="left:1368.3px;top:52.3px;width:43.2px;height:34.2px;border:1px solid #e2e2e4;border-radius:5px;background:#fff"></div>
<div class="t" style="left:1094.00px;top:62.81px;font-size:14.4px;font-weight:normal;color:#111;letter-spacing:-0.856px;">Today</div>
<svg width="1440" height="900" fill="none" stroke="#555" stroke-width="1.2" stroke-linecap="round" stroke-linejoin="round">
<rect x="1070.5" y="63.5" width="13.5" height="13" rx="1.5"/>
<path d="M1073.5 62V65M1081 62V65M1070.5 67H1084"/>
<g fill="#777" stroke="none"><rect x="1072.6" y="68.8" width="1.6" height="1.4"/><rect x="1075.3" y="68.8" width="1.6" height="1.4"/><rect x="1078" y="68.8" width="1.6" height="1.4"/><rect x="1080.7" y="68.8" width="1.6" height="1.4"/>
<rect x="1072.6" y="71.3" width="1.6" height="1.4"/><rect x="1075.3" y="71.3" width="1.6" height="1.4"/><rect x="1078" y="71.3" width="1.6" height="1.4"/><rect x="1080.7" y="71.3" width="1.6" height="1.4"/>
<rect x="1072.6" y="73.8" width="1.6" height="1.4"/><rect x="1075.3" y="73.8" width="1.6" height="1.4"/><rect x="1078" y="73.8" width="1.6" height="1.4"/></g>
<path d="M1156 68.3L1160.4 72.8L1164.8 68.3" stroke="#444" stroke-width="1.2"/>
<path d="M1215.8 64.5A6.2 6.2 0 1 0 1216.5 71" stroke="#555" stroke-width="1.5"/>
<path d="M1216.5 61.5V65.5H1212.5" stroke="#555" stroke-width="1.5"/>
<path d="M1231.9 64.3V75.8M1273.9 64.3V75.8M1315.9 64.3V75.8" stroke="#dcdcde" stroke-width="1.6" stroke-linecap="butt"/>
<path d="M1243.2 65.3H1248.3M1243.2 68.8H1249.5M1243.2 72.2H1250M1243.2 75.5H1250" stroke-width="1"/>
<path d="M1248.5 62.8H1261.5L1255.8 69.3L1254.2 75.8L1252.6 69.3Z" stroke-width="1.15"/>
<rect x="1286.6" y="62.7" width="15.2" height="12.6" rx="2" stroke-width="1.15"/>
<path d="M1288.6 65L1294.2 69.6L1299.8 65" stroke-width="1.15"/>
<path d="M1336 64.5H1331V76H1342.5V71" stroke-width="1.4"/>
<path d="M1337 70.5L1343 64.5M1338.5 63.5H1343V68" stroke-width="1.4"/>
<path d="M1383.8 64.8H1395.8M1383.8 69.4H1395.8M1383.8 74H1395.8" stroke="#666" stroke-width="1.1"/>
<path d="M1386.8 62.8V66.8M1392.5 67.4V71.4M1386.8 72V76" stroke="#555" stroke-width="1.8" stroke-linecap="butt"/>
</svg>
<div class="abs" style="left:1096px;top:90px;width:315px;height:348px;background:#fff;border-radius:1px;box-shadow:0 3px 7px rgba(0,0,0,0.13),0 0 2px rgba(0,0,0,0.10)"></div>
<div class="abs" style="left:1096px;top:137.5px;width:315px;height:1px;background:#e6e6e8"></div>
<div class="t" style="left:852.94px;width:800px;text-align:center;top:107.54px;font-size:14.6px;font-weight:bold;color:#111;letter-spacing:-0.727px;">Settings</div>
<div class="t" style="left:1110.75px;top:162.28px;font-size:11.6px;font-weight:bold;color:#9a9a9a;letter-spacing:-0.736px;">GENERAL</div>
<div class="t" style="left:1110.75px;top:197.13px;font-size:13.9px;font-weight:normal;color:#111;letter-spacing:-0.452px;">Time Zone</div>
<div class="abs" style="left:1110.75px;top:220.5px;width:285.5px;height:39.5px;border:1px solid #d6d6da;border-radius:4px;background:#fff"></div>
<div class="t" style="left:1130.75px;top:232.94px;font-size:14.6px;font-weight:normal;color:#111;letter-spacing:-0.339px;">( GMT 5:30 ) India Standard Time(A...</div>
<div class="t" style="left:1110.70px;top:294.00px;font-size:14.3px;font-weight:normal;color:#111;letter-spacing:-0.477px;">Show data for all departments</div>
<div class="t" style="left:1110.70px;top:342.93px;font-size:13.9px;font-weight:normal;color:#111;letter-spacing:-0.288px;">Include bot data</div>
<div class="abs" style="left:1359.9px;top:288.8px;width:36.5px;height:21px;border-radius:11px;background:#6acd63"></div>
<div class="abs" style="left:1376.6px;top:290.3px;width:18px;height:18px;border-radius:50%;background:#fff"></div>
<div class="abs" style="left:1359.9px;top:336.8px;width:36.5px;height:21px;border-radius:11px;background:#6acd63"></div>
<div class="abs" style="left:1376.6px;top:338.3px;width:18px;height:18px;border-radius:50%;background:#fff"></div>
<div class="abs" style="left:1110.7px;top:384.8px;width:285.5px;height:34px;border-radius:3px;background:#6aa6f2"></div>
<div class="t" style="left:852.52px;width:800px;text-align:center;top:396.23px;font-size:13.9px;font-weight:bold;color:#eef4fd;letter-spacing:-1.554px;">Save</div>
<svg width="1440" height="900">
<path d="M1370.5 237.5L1375.2 242.2L1379.9 237.5" fill="none" stroke="#444" stroke-width="1.3" stroke-linecap="round" stroke-linejoin="round"/>
<rect x="942.5" y="299.5" width="140" height="4.6" fill="#000"/>
<path d="M1077 287.3L1102.4 301.8L1077 316.2Z" fill="#000"/>
</svg>
<div class="abs" style="left:67px;top:871px;width:1371px;height:1px;background:#f0f0f2"></div>
<div class="abs" style="left:67px;top:872px;width:1371px;height:1px;background:#dcdcde"></div>
<div class="abs" style="left:67px;top:873px;width:1371px;height:25px;background:#fff"></div>
<div class="abs" style="left:67.8px;top:873px;width:77.2px;height:25px;background:#f8e3a1"></div>
<div class="abs" style="left:315px;top:873px;width:1px;height:25px;background:#e6e6e8"></div>
<div class="abs" style="left:1366.5px;top:873px;width:1px;height:25px;background:#e6e6e8"></div>
<div class="abs" style="left:1411.5px;top:873px;width:1px;height:25px;background:#e6e6e8"></div>
<div class="t" style="left:325.00px;top:881.72px;font-size:11.2px;font-weight:normal;color:#8a8a8e;letter-spacing:-0.097px;">Here is your Smart Chat (Ctrl+Space)</div>
<div class="t" style="left:-294.20px;width:800px;text-align:center;top:891.68px;font-size:7.7px;font-weight:normal;color:#222;">Unread Chats</div>
<div class="t" style="left:-209.20px;width:800px;text-align:center;top:891.85px;font-size:7.5px;font-weight:normal;color:#777;">Channels</div>
<div class="t" style="left:-124.40px;width:800px;text-align:center;top:891.85px;font-size:7.5px;font-weight:normal;color:#777;">Contacts</div>
<svg width="1440" height="900">
<ellipse cx="102.3" cy="885.6" rx="3.3" ry="3.9" fill="#1d1d22"/><path d="M100.2 887.5L100.6 890.3L103 888.6Z" fill="#1d1d22"/>
<ellipse cx="105.6" cy="883.3" rx="3.4" ry="4.4" fill="#3a3a3e" stroke="#f8e3a1" stroke-width="0.8"/>
<circle cx="113.9" cy="882.9" r="6.3" fill="#e42a20" stroke="#fff" stroke-width="1"/>
<text x="113.9" y="885.8" font-family="Liberation Sans" font-size="8" font-weight="bold" fill="#fff" text-anchor="middle">31</text>
<g fill="#8a8a8e">
<circle cx="190.8" cy="880.5" r="2"/><circle cx="186" cy="881.5" r="1.6"/><circle cx="195.6" cy="881.5" r="1.6"/>
<path d="M187 889.5C187 885.5 188.5 884 190.8 884C193.1 884 194.6 885.5 194.6 889.5Z"/>
<path d="M183 888.5C183 885.5 184 884.5 186 884.5C186.8 884.5 187.2 884.7 187.5 885L186.5 888.5Z"/>
<path d="M198.6 888.5C198.6 885.5 197.6 884.5 195.6 884.5C194.8 884.5 194.4 884.7 194.1 885L195.1 888.5Z"/>
<circle cx="275.6" cy="880.8" r="2.6"/>
<path d="M270.5 890C270.5 886 272.5 884.5 275.6 884.5C278.7 884.5 280.7 886 280.7 890Z"/>
</g>
<g fill="none" stroke="#444" stroke-width="0.9">
<rect x="1382.5" y="881" width="14" height="9.5"/>
<path d="M1382 892.5H1397M1389.5 890.5V892.5"/>
</g>
<g fill="#444"><circle cx="1389.5" cy="884" r="1.2"/><path d="M1387 888C1387 886.5 1388 886 1389.5 886C1391 886 1392 886.5 1392 888Z"/></g>
<g fill="none" stroke="#333" stroke-width="1">
<path d="M1420.5 884C1420.5 881.5 1421.5 880.5 1424 880.5H1428C1430.5 880.5 1431.5 881.5 1431.5 884V889C1431.5 891.5 1430.5 892.5 1428 892.5H1424C1421.5 892.5 1420.5 891.5 1420.5 889Z"/>
<path d="M1422.5 882V880C1422.5 879.3 1423 878.8 1423.7 878.8H1430C1432 878.8 1433 879.8 1433 881.8V888"/>
<path d="M1423 885H1429M1423 887.5H1426.5"/>
</g>
</svg>
</body></html>
